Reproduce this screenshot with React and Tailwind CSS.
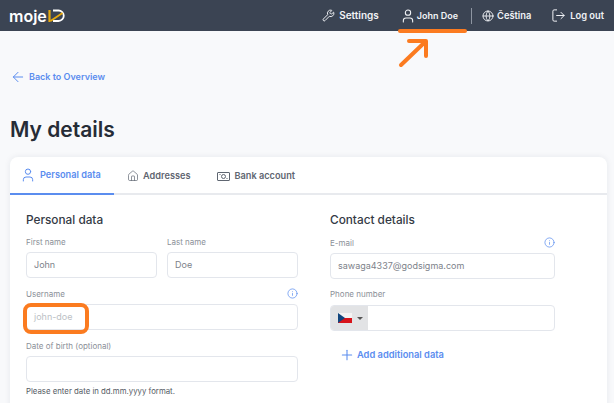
import React from 'react';
import { ArrowLeft, Globe, House, Info, LogOut, Plus, User, Wrench } from 'lucide-react';

const font = { fontFamily: 'Inter' };

function NavItem({ icon: Icon, size = 13, label, className = '' }) {
  return (
    <div className={`flex items-center font-semibold text-[#f1f3f6] ${className}`}>
      <Icon size={size} strokeWidth={size > 13 ? 1.6 : 1.8} />
      <span>{label}</span>
    </div>
  );
}

function Tab({ icon, label, active }) {
  return (
    <div className={`flex h-[38px] items-center gap-[4px] text-[9.2px] font-semibold ${active ? 'w-[104px] border-b-2 border-[#5b8def] pl-[10px] text-[#5b8def]' : 'text-[#5f6671]'}`}>
      {icon}
      <span>{label}</span>
    </div>
  );
}

function Field({ label, value, info, placeholder, className = '' }) {
  return (
    <div className={className}>
      <div className="flex h-[11px] items-center justify-between text-[8px] text-[#8b9098]">
        <span>{label}</span>
        {info && <Info size={11} strokeWidth={1.6} className="text-[#5b8def]" />}
      </div>
      <div className={`mt-[5px] flex h-[26px] items-center rounded-[4px] border border-[#e3e6ec] bg-white px-[7px] text-[9px] ${placeholder ? 'text-[#bcbfc5]' : 'text-[#7d828a]'}`}>
        {value}
      </div>
    </div>
  );
}

function BankIcon() {
  return (
    <svg width="13" height="11" viewBox="0 0 13 11" fill="none" stroke="currentColor" strokeWidth="1">
      <rect x="0.5" y="1.5" width="12" height="8" rx="0.5" />
      <circle cx="6.5" cy="5.5" r="2" />
      <path d="M2.5 3.5h1M9.5 7.5h1" />
    </svg>
  );
}

function CzechFlag() {
  return (
    <svg width="14" height="10" viewBox="0 0 14 10">
      <rect width="14" height="5" fill="#f4f4f4" />
      <rect y="5" width="14" height="5" fill="#d7141a" />
      <path d="M0 0l7 5-7 5z" fill="#11457e" />
    </svg>
  );
}

export default function App() {
  return (
    <div className="relative h-[403px] w-[614px] overflow-hidden bg-[#f8f9fb]" style={font}>
      <header className="flex h-[31px] items-center justify-between bg-[#3b4453] pl-[9px] pr-[10px]">
        <div className="flex items-center text-[16px] font-semibold leading-none text-white">
          <span>moje</span>
          <svg className="ml-[1px]" width="18" height="14" viewBox="0 0 18 14" fill="none">
            <path d="M5 1.5h5.5a5.25 5.25 0 0 1 0 10.5H5" stroke="#fff" strokeWidth="1.8" />
            <path d="M1.5 1v12" stroke="#e8a90c" strokeWidth="2.2" />
            <path d="M2.5 12L14.5 4" stroke="#e8a90c" strokeWidth="1.8" />
          </svg>
        </div>
        <div className="flex items-center">
          <NavItem icon={Wrench} label="Settings" className="gap-[4px] text-[10px]" />
          <NavItem icon={User} size={16} label="John Doe" className="ml-[21px] gap-[1px] text-[9px]" />
          <div className="ml-[13px] h-[16px] w-px bg-[#8d95a1]" />
          <NavItem icon={Globe} size={12} label="Čeština" className="ml-[10px] gap-[3px] text-[9.3px]" />
          <NavItem icon={LogOut} size={15} label="Log out" className="ml-[20px] gap-[4px] text-[9.3px]" />
        </div>
      </header>

      <main className="px-[10px]">
        <div className="mt-[39px] flex h-[14px] items-center gap-[3px] text-[9px] font-semibold text-[#5b8def]">
          <ArrowLeft size={16} strokeWidth={1.5} />
          <span>Back to Overview</span>
        </div>
        <h1 className="mt-[33px] h-[26px] text-[21px] font-semibold leading-[26px] text-[#262c36]">My details</h1>

        <section className="mt-[14px] w-[597px] rounded-t-[8px] bg-white pb-4 shadow-[0_0_6px_rgba(30,40,60,0.08)]">
          <div className="flex items-center border-b-2 border-[#e8eaee]">
            <div className="-mb-[2px] flex items-center gap-[13px]">
              <Tab active icon={<User size={16} strokeWidth={1.5} />} label="Personal data" />
              <Tab icon={<House size={12} strokeWidth={1.4} />} label="Addresses" />
              <div className="ml-[14px]">
                <Tab icon={<BankIcon />} label="Bank account" />
              </div>
            </div>
          </div>

          <div className="flex px-[16px] pt-[17px]">
            <div className="w-[272px]">
              <h2 className="h-[16px] text-[11.8px] font-medium leading-[16px] text-[#343a45]">Personal data</h2>
              <div className="mt-[8px] flex gap-[10px]">
                <Field label="First name" value="John" className="w-[131px]" />
                <Field label="Last name" value="Doe" className="w-[131px]" />
              </div>
              <Field label="Username" value="john-doe" info placeholder className="mt-[10px]" />
              <Field label="Date of birth (optional)" value="" className="mt-[10px]" />
              <p className="mt-[4px] text-[7.8px] text-[#555b65]">Please enter date in dd.mm.yyyy format.</p>
            </div>

            <div className="ml-[32px] w-[225px]">
              <h2 className="h-[16px] text-[11.8px] font-medium leading-[16px] text-[#343a45]">Contact details</h2>
              <Field label="E-mail" value="sawaga4337@godsigma.com" info className="mt-[9px]" />
              <div className="mt-[10px]">
                <div className="h-[11px] text-[8px] leading-[11px] text-[#8b9098]">Phone number</div>
                <div className="mt-[5px] flex h-[26px] overflow-hidden rounded-[4px] border border-[#e3e6ec] bg-white">
                  <div className="flex w-[37px] items-center gap-[5px] bg-[#e2e3e5] pl-[7px]">
                    <CzechFlag />
                    <div className="h-0 w-0 border-x-[3px] border-t-[3px] border-x-transparent border-t-[#555]" />
                  </div>
                </div>
              </div>
              <div className="mt-[16px] flex items-center gap-[2px] pl-[9px] text-[9.3px] font-semibold text-[#5b8def]">
                <Plus size={16} strokeWidth={1.6} />
                <span>Add additional data</span>
              </div>
            </div>
          </div>
        </section>
      </main>

      {/* orange annotations painted over the screenshot */}
      <div className="absolute left-[398px] top-[29px] h-[4px] w-[69px] rounded-full bg-[#fb7b20]" />
      <svg className="absolute left-[396px] top-[36px]" width="36" height="34" viewBox="0 0 36 34" fill="none" stroke="#fb7b20" strokeWidth="4" strokeLinecap="round" strokeLinejoin="round">
        <path d="M5 29L29 6M13 5h17v15" />
      </svg>
      <div className="absolute left-[23px] top-[303px] h-[31px] w-[66px] rounded-[8px] border-4 border-[#fb7b20]" />
    </div>
  );
}
